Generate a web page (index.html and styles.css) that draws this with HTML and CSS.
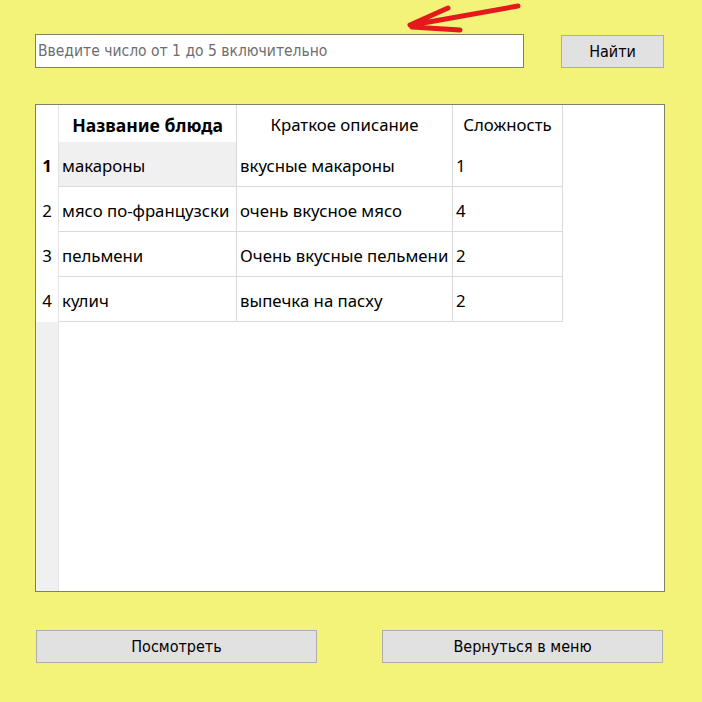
FILE: index.html
```html
<!DOCTYPE html>
<html lang="ru">
<head>
<meta charset="utf-8">
<link rel="stylesheet" href="styles.css">
</head>
<body>
<div class="window">
  <svg class="arrow" width="130" height="34" viewBox="0 0 130 34">
    <path d="M120 5 L14 24 M12 24 L50 7 M14 26 L62 29" stroke="#e3191c" stroke-width="5" stroke-linecap="round" fill="none"/>
  </svg>
  <div class="top">
    <input class="search" type="text" placeholder="Введите число от 1 до 5 включительно">
    <button class="btn btn-find">Найти</button>
  </div>
  <div class="frame">
    <div class="vhead">
      <div class="corner"></div>
      <div class="num bold">1</div>
      <div class="num">2</div>
      <div class="num">3</div>
      <div class="num">4</div>
    </div>
    <div class="grid">
      <div class="hcell bold">Название блюда</div>
      <div class="hcell">Краткое описание</div>
      <div class="hcell">Сложность</div>
      <div class="cell sel">макароны</div>
      <div class="cell">вкусные макароны</div>
      <div class="cell">1</div>
      <div class="cell">мясо по-французски</div>
      <div class="cell">очень вкусное мясо</div>
      <div class="cell">4</div>
      <div class="cell">пельмени</div>
      <div class="cell">Очень вкусные пельмени</div>
      <div class="cell">2</div>
      <div class="cell">кулич</div>
      <div class="cell">выпечка на пасху</div>
      <div class="cell">2</div>
    </div>
  </div>
  <div class="bottom">
    <button class="btn btn-wide">Посмотреть</button>
    <button class="btn btn-wide">Вернуться в меню</button>
  </div>
</div>
</body>
</html>
```
FILE: styles.css
```css
html, body {
  margin: 0;
  padding: 0;
  background: #f3f37a;
}
.window {
  position: relative;
  width: 702px;
  height: 702px;
  box-sizing: border-box;
  padding: 34px 38px 0 35px;
}
.arrow {
  position: absolute;
  left: 398px;
  top: 1px;
}
.top {
  display: flex;
  align-items: flex-start;
}
.search {
  width: 489px;
  height: 34px;
  box-sizing: border-box;
  border: 1px solid #808066;
  background: #fff;
  margin: 0;
  padding: 0 2px;
  font-family: "Liberation Sans Narrow", "DejaVu Sans Condensed", sans-serif;
  font-stretch: condensed;
  font-size: 15.5px;
  color: #333;
  outline: none;
}
.search::placeholder {
  color: #6e6e6e;
}
.btn {
  box-sizing: border-box;
  height: 33px;
  margin: 0;
  padding: 0;
  background: #e1e1e1;
  border: 1px solid #adadad;
  font-family: "Liberation Sans Narrow", "DejaVu Sans Condensed", sans-serif;
  font-stretch: condensed;
  font-size: 16px;
  color: #000;
}
.btn-find {
  width: 103px;
  margin-left: 37px;
  margin-top: 1px;
}
.frame {
  margin-top: 36px;
  width: 630px;
  height: 488px;
  box-sizing: border-box;
  border: 1px solid #808066;
  background: #fff;
  display: flex;
  font-family: "Noto Sans", "Open Sans", sans-serif;
  font-size: 16.8px;
  color: #000;
}
.vhead {
  width: 22px;
  background: #f0f0f0;
  display: flex;
  flex-direction: column;
  border-right: 1px solid #e4e4e4;
}
.corner {
  height: 37px;
  background: #fff;
}
.num {
  height: 45px;
  padding-top: 2px;
  box-sizing: border-box;
  background: #fff;
  display: flex;
  align-items: center;
  justify-content: center;
}
.bold {
  font-weight: bold;
}
.hcell.bold {
  font-size: 17.6px;
}
.grid {
  display: grid;
  grid-template-columns: 178px 216px 110px;
  grid-template-rows: 37px repeat(4, 45px);
  align-self: flex-start;
}
.hcell {
  display: flex;
  align-items: center;
  justify-content: center;
  padding-top: 2px;
  box-sizing: border-box;
  border-right: 1px solid #dadada;
}
.cell {
  display: flex;
  align-items: center;
  padding-left: 3px;
  padding-top: 2px;
  box-sizing: border-box;
  border-right: 1px solid #dadada;
  border-bottom: 1px solid #dadada;
  white-space: nowrap;
}
.sel {
  background: #f0f0f0;
}
.bottom {
  margin-top: 38px;
  display: flex;
  justify-content: space-between;
  padding: 0 1px 0 1px;
}
.btn-wide {
  width: 281px;
}
```
